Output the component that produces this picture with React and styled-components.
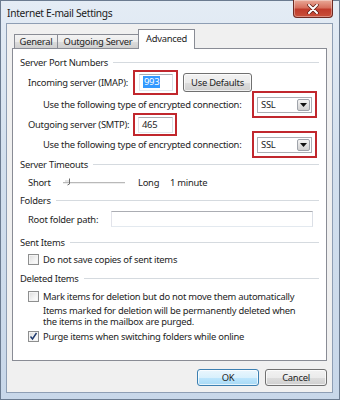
import React from "react";
import styled, { createGlobalStyle } from "styled-components";

const Global = createGlobalStyle`
  html, body { margin: 0; padding: 0; background: #fff; }
  * { box-sizing: border-box; }
`;

const Window = styled.div`
  width: 340px;
  height: 400px;
  display: flex;
  flex-direction: column;
  border: 1px solid #6b7b90;
  background: linear-gradient(180deg, #e4ecf5 0%, #d3e0ee 40%, #c8d7e9 100%);
  font-family: "Noto Sans", "Open Sans", sans-serif;
  font-size: 9.4px;
  letter-spacing: -0.25px;
  color: #1e1e1e;
  white-space: nowrap;
`;

const TitleBar = styled.div`
  height: 22px;
  display: flex;
  align-items: flex-start;
  justify-content: space-between;
`;

const Title = styled.div`
  font-size: 10.2px;
  letter-spacing: -0.3px;
  color: #1b1b1b;
  padding: 5px 0 0 6px;
`;

const Close = styled.div`
  width: 40px;
  height: 18px;
  margin: -1px 6px 0 0;
  border: 1px solid #6e2a22;
  border-top: none;
  border-radius: 0 0 4px 4px;
  background: linear-gradient(180deg, #e9a998 0%, #d7705e 45%, #c03b2b 55%, #c9503a 100%);
  display: flex;
  align-items: center;
  justify-content: center;
  box-shadow: inset 0 0 0 1px rgba(255, 255, 255, 0.35);
`;

const Client = styled.div`
  flex: 1;
  margin: 0 6px 6px 5px;
  border: 1px solid #8e9eb4;
  background: #f0f0f0;
  padding: 5px 5px 0 5px;
  display: flex;
  flex-direction: column;
`;

const TabStrip = styled.div`
  display: flex;
  align-items: flex-end;
  height: 19px;
  margin-left: 2px;
  position: relative;
  z-index: 1;
`;

const Tab = styled.div`
  width: ${(p) => p.$w}px;
  height: ${(p) => (p.$active ? 20 : 15)}px;
  margin: 0 ${(p) => (p.$active ? 0 : -1)}px -1px 0;
  border: 1px solid #898c95;
  border-bottom: ${(p) => (p.$active ? "none" : "1px solid #898c95")};
  background: ${(p) =>
    p.$active ? "#fff" : "linear-gradient(180deg, #f3f3f3 0%, #ebebeb 50%, #dddddd 51%, #cfcfcf 100%)"};
  display: flex;
  justify-content: center;
  align-items: ${(p) => (p.$active ? "flex-start" : "center")};
  padding-top: ${(p) => (p.$active ? 3 : 0)}px;
  line-height: 12px;
  position: relative;
  z-index: ${(p) => (p.$active ? 2 : 0)};
`;

const Panel = styled.div`
  height: 313px;
  background: #fff;
  border: 1px solid #898c95;
  padding: 6px 7px 0 7px;
  display: flex;
  flex-direction: column;
`;

const Header = styled.div`
  height: ${(p) => p.$h}px;
  margin-top: ${(p) => p.$mt || 0}px;
  display: flex;
  align-items: center;
  gap: 5px;
  flex-shrink: 0;
  &::after {
    content: "";
    flex: 1;
    height: 1px;
    background: #d5dadf;
  }
`;

const Row = styled.div`
  height: ${(p) => p.$h}px;
  display: flex;
  align-items: center;
  padding-left: ${(p) => p.$indent}px;
  flex-shrink: 0;
`;

const Label = styled.span`
  width: ${(p) => (p.$w ? `${p.$w}px` : "auto")};
  margin-left: ${(p) => p.$ml || 0}px;
  flex-shrink: 0;
`;

const RedBox = styled.div`
  border: 2px solid #c1272d;
  padding: ${(p) => p.$pad};
  flex-shrink: 0;
  margin-left: ${(p) => (p.$right ? "auto" : "0")};
  margin-right: ${(p) => (p.$right ? 2 : 0)}px;
  display: flex;
`;

const TextBox = styled.div`
  width: ${(p) => (p.$w ? `${p.$w}px` : "auto")};
  flex: ${(p) => (p.$w ? "none" : 1)};
  height: ${(p) => p.$hgt || 16}px;
  margin-right: ${(p) => p.$mr || 0}px;
  border: 1px solid #abadb3;
  border-left-color: #e2e3ea;
  border-right-color: #dbdfe6;
  border-bottom-color: #e3e9ef;
  background: #fff;
  display: flex;
  align-items: center;
  padding-left: 3px;
`;

const Selected = styled.span`
  background: #3399ff;
  color: #fff;
  line-height: 12px;
  padding: 0 1px;
`;

const Button = styled.div`
  width: ${(p) => p.$w}px;
  height: ${(p) => p.$hgt}px;
  margin-left: ${(p) => p.$ml || 0}px;
  border: 1px solid ${(p) => (p.$default ? "#3c7fb1" : "#707070")};
  border-radius: 3px;
  background: ${(p) =>
    p.$default
      ? "linear-gradient(180deg, #eaf6fd 0%, #d9f0fc 50%, #bee6fd 51%, #a7d9f5 100%)"
      : "linear-gradient(180deg, #f2f2f2 0%, #ebebeb 50%, #dddddd 51%, #cfcfcf 100%)"};
  box-shadow: inset 0 0 0 1px rgba(255, 255, 255, 0.7);
  display: flex;
  align-items: center;
  justify-content: center;
  flex-shrink: 0;
`;

const Select = styled.div`
  width: 55px;
  height: 16px;
  border: 1px solid #abadb3;
  background: #fff;
  display: flex;
  align-items: center;
  justify-content: space-between;
  padding: 0 1px 0 3px;
`;

const Arrow = styled.div`
  width: 13px;
  height: 12px;
  border: 1px solid #a0a4ab;
  border-radius: 2px;
  background: linear-gradient(180deg, #f4f4f4 0%, #e2e2e2 50%, #d0d0d0 100%);
  display: flex;
  align-items: center;
  justify-content: center;
`;

const Check = styled.div`
  width: 11px;
  height: 11px;
  margin-right: 4px;
  border: 1px solid #8e8f8f;
  background: linear-gradient(135deg, #dcdcdc 0%, #f4f4f4 60%, #fff 100%);
  box-shadow: inset 0 0 0 1px #f4f4f4;
  display: flex;
  align-items: center;
  justify-content: center;
  flex-shrink: 0;
`;

const Note = styled.div`
  padding-left: 23px;
  line-height: 11px;
  height: 22px;
  flex-shrink: 0;
`;

const Footer = styled.div`
  display: flex;
  justify-content: flex-end;
  gap: 6px;
  padding-top: 8px;
`;

function SslSelect() {
  return (
    <RedBox $right $pad="4px 3px 3px 3px">
      <Select>
        <span>SSL</span>
        <Arrow>
          <svg width="7" height="4" viewBox="0 0 7 4">
            <path d="M0 0h7L3.5 4z" fill="#111" />
          </svg>
        </Arrow>
      </Select>
    </RedBox>
  );
}

function Checkbox({ checked, h, children }) {
  return (
    <Row $h={h} $indent={8}>
      <Check>
        {checked && (
          <svg width="9" height="9" viewBox="0 0 9 9">
            <path d="M1.5 4.5l2 2.5 4-6" stroke="#1f3a6e" strokeWidth="1.4" fill="none" />
          </svg>
        )}
      </Check>
      <span>{children}</span>
    </Row>
  );
}

export default function App() {
  return (
    <Window>
      <Global />
      <TitleBar>
        <Title>Internet E-mail Settings</Title>
        <Close>
          <svg width="12" height="10" viewBox="0 0 12 10">
            <path d="M2 1l8 8M10 1l-8 8" stroke="#5a1a12" strokeWidth="3.4" strokeLinecap="round" />
            <path d="M2 1l8 8M10 1l-8 8" stroke="#fff" strokeWidth="2" strokeLinecap="round" />
          </svg>
        </Close>
      </TitleBar>
      <Client>
        <TabStrip>
          <Tab $w={44}>General</Tab>
          <Tab $w={82}>Outgoing Server</Tab>
          <Tab $w={57} $active>Advanced</Tab>
        </TabStrip>
        <Panel>
          <Header $h={14}>Server Port Numbers</Header>
          <Row $h={26} $indent={8}>
            <Label $w={105}>Incoming server (IMAP):</Label>
            <RedBox $pad="2px 3px 2px 4px">
              <TextBox $w={34} $hgt={17}>
                <Selected>993</Selected>
              </TextBox>
            </RedBox>
            <Button $w={69} $hgt={19} $ml={5}>Use Defaults</Button>
          </Row>
          <Row $h={18} $indent={23}>
            <span>Use the following type of encrypted connection:</span>
            <SslSelect />
          </Row>
          <Row $h={22} $indent={8}>
            <Label $w={105}>Outgoing server (SMTP):</Label>
            <RedBox $pad="2px 2px 1px 3px">
              <TextBox $w={35} $hgt={16}>465</TextBox>
            </RedBox>
          </Row>
          <Row $h={18} $indent={23}>
            <span>Use the following type of encrypted connection:</span>
            <SslSelect />
          </Row>
          <Header $h={22}>Server Timeouts</Header>
          <Row $h={14} $indent={8}>
            <Label $w={35}>Short</Label>
            <svg width="62" height="10" viewBox="0 0 62 10">
              <line x1="0" y1="5.5" x2="62" y2="5.5" stroke="#b9b9b9" />
              <line x1="0" y1="6.5" x2="62" y2="6.5" stroke="#ededed" />
              <path d="M2 4h4" stroke="#c9c9c9" />
              <path d="M6.5 1.5v5.5l-2 1" stroke="#6c6c6c" fill="none" />
            </svg>
            <Label $w={32} $ml={13}>Long</Label>
            <span>1 minute</span>
          </Row>
          <Header $h={22}>Folders</Header>
          <Row $h={16} $indent={8}>
            <Label $w={83}>Root folder path:</Label>
            <TextBox $hgt={16} $mr={6} />
          </Row>
          <Header $h={16} $mt={7}>Sent Items</Header>
          <Checkbox h={18}>Do not save copies of sent items</Checkbox>
          <Header $h={20}>Deleted Items</Header>
          <Checkbox h={17}>Mark items for deletion but do not move them automatically</Checkbox>
          <Note>
            Items marked for deletion will be permanently deleted when
            <br />
            the items in the mailbox are purged.
          </Note>
          <Checkbox h={19} checked>Purge items when switching folders while online</Checkbox>
        </Panel>
        <Footer>
          <Button $w={62} $hgt={17} $default>OK</Button>
          <Button $w={62} $hgt={17}>Cancel</Button>
        </Footer>
      </Client>
    </Window>
  );
}
